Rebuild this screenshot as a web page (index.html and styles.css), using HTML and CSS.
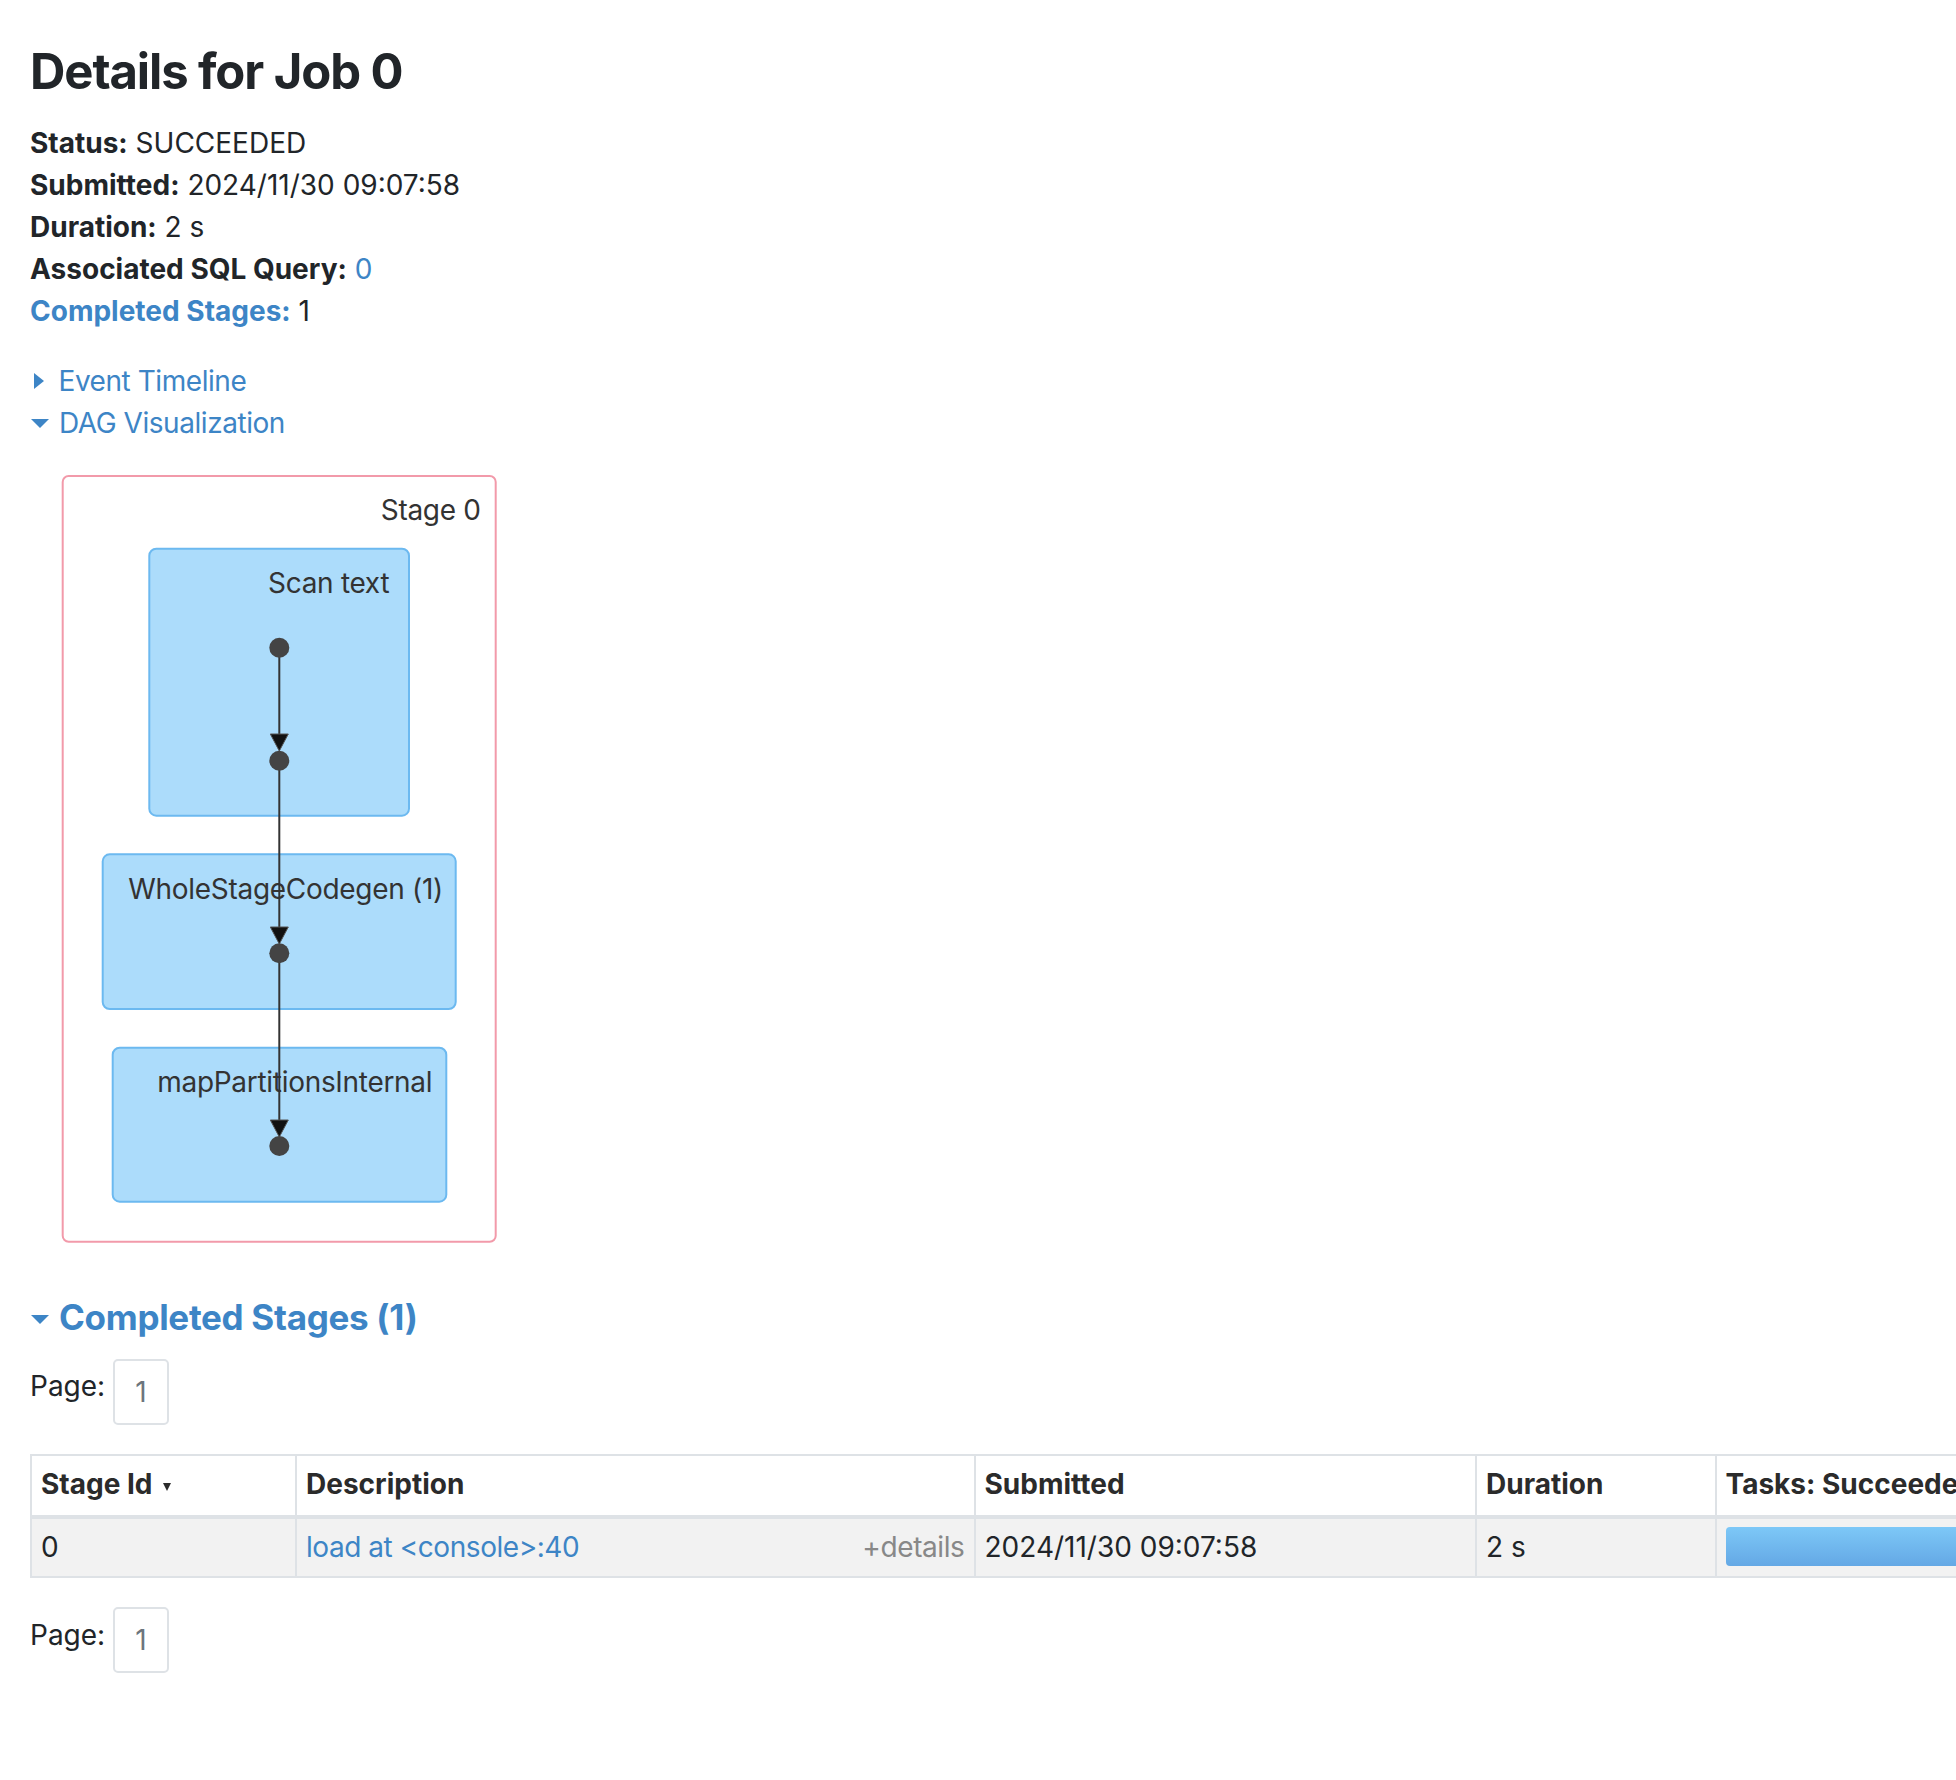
FILE: index.html
```html
<!DOCTYPE html>
<html>
<head>
<meta charset="utf-8">
<title>Details for Job 0</title>
<link rel="stylesheet" href="styles.css">
</head>
<body>
<div class="page">
  <h3 class="title">Details for Job 0</h3>
  <ul class="summary">
    <li><strong>Status:</strong> SUCCEEDED</li>
    <li><strong>Submitted:</strong> 2024/11/30 09:07:58</li>
    <li><strong>Duration:</strong> 2 s</li>
    <li><strong>Associated SQL Query:</strong> <a class="link" href="#">0</a></li>
    <li><a class="link strong summary-link" href="#">Completed Stages:</a> 1</li>
  </ul>

  <div class="toggles">
    <div class="toggle"><span class="tri tri-right"></span><a class="link" href="#">Event Timeline</a></div>
    <div class="toggle"><span class="tri tri-down"></span><a class="link" href="#">DAG Visualization</a></div>
  </div>

  <svg class="dag" width="520" height="790" viewBox="0 0 520 790" xmlns="http://www.w3.org/2000/svg">
    <rect class="stage" x="32.7" y="16" width="433" height="765.7" rx="6" ry="6"/>
    <text class="dag-label" x="450.7" y="60" text-anchor="end">Stage 0</text>

    <rect class="node" x="119.3" y="88.7" width="259.7" height="267" rx="7" ry="7"/>
    <rect class="node" x="72.7" y="394.3" width="353" height="154.7" rx="7" ry="7"/>
    <rect class="node" x="82.7" y="587.7" width="333.6" height="154" rx="7" ry="7"/>

    <text class="dag-label" x="238" y="132.7">Scan text</text>
    <text class="dag-label" x="98.3" y="439.3">WholeStageCodegen (1)</text>
    <text class="dag-label" x="127.3" y="631.7">mapPartitionsInternal</text>

    <line class="edge" x1="249.3" y1="187.7" x2="249.3" y2="285"/>
    <line class="edge" x1="249.3" y1="300.7" x2="249.3" y2="478"/>
    <line class="edge" x1="249.3" y1="493.3" x2="249.3" y2="670"/>
    <polygon class="arrow" points="240.3,274 258.3,274 249.3,291"/>
    <polygon class="arrow" points="240.3,467 258.3,467 249.3,484"/>
    <polygon class="arrow" points="240.3,660 258.3,660 249.3,677"/>

    <circle class="dot" cx="249.3" cy="187.7" r="10"/>
    <circle class="dot" cx="249.3" cy="300.7" r="10"/>
    <circle class="dot" cx="249.3" cy="493.3" r="10"/>
    <circle class="dot" cx="249.3" cy="686" r="10"/>
  </svg>

  <h4 class="section"><span class="tri tri-down"></span><a class="link strong" href="#">Completed Stages (1)</a></h4>

  <div class="pager pager-top">
    <span class="pager-label">Page:</span>
    <span class="page-box">1</span>
  </div>

  <div class="table-wrap">
    <table class="stages">
      <colgroup>
        <col class="c-id">
        <col class="c-desc">
        <col class="c-sub">
        <col class="c-dur">
        <col class="c-tasks">
      </colgroup>
      <thead>
        <tr>
          <th>Stage Id<span class="sort"></span></th>
          <th>Description</th>
          <th>Submitted</th>
          <th>Duration</th>
          <th>Tasks: Succeeded/Total</th>
        </tr>
      </thead>
      <tbody>
        <tr>
          <td>0</td>
          <td><span class="details">+details</span><a class="link" href="#">load at &lt;console&gt;:40</a></td>
          <td>2024/11/30 09:07:58</td>
          <td>2 s</td>
          <td><div class="progress"></div></td>
        </tr>
      </tbody>
    </table>
  </div>

  <div class="pager pager-bottom">
    <span class="pager-label">Page:</span>
    <span class="page-box">1</span>
  </div>
</div>
</body>
</html>
```

FILE: styles.css
```css
html, body {
  margin: 0;
  padding: 0;
  background: #ffffff;
  overflow: hidden;
}

body {
  font-family: Inter, "Liberation Sans", sans-serif;
  font-size: 28px;
  line-height: 42px;
  color: #212529;
}

.page {
  padding: 0 0 0 30px;
}

.link {
  color: #3d85c6;
  text-decoration: none;
  letter-spacing: -0.45px;
}

.strong {
  font-weight: 700;
  letter-spacing: -0.2px;
}

.summary .summary-link {
  letter-spacing: 0;
}

.title {
  font-size: 49px;
  font-weight: 700;
  line-height: 58.8px;
  letter-spacing: -1.1px;
  margin: 42.5px 0 20.6px;
  color: #212529;
}

.summary {
  list-style: none;
  margin: 0 0 28.3px;
  padding: 0;
}

.summary strong {
  font-weight: 700;
}

.toggles {
  display: flex;
  flex-direction: column;
}

.toggle {
  display: flex;
  align-items: center;
  height: 42px;
}

.tri {
  display: inline-block;
  width: 0;
  height: 0;
  border-style: solid;
  flex-shrink: 0;
}

.tri-right {
  border-width: 8.5px 0 8.5px 10px;
  border-color: transparent transparent transparent #3d85c6;
  margin: 0 14.5px 0 4px;
}

.tri-down {
  border-width: 9.5px 9px 0 9px;
  border-color: #3d85c6 transparent transparent transparent;
  margin: 0 10px 0 1px;
}

.dag {
  display: block;
  margin-top: 15.45px;
}

.dag .stage {
  fill: #ffffff;
  stroke: #f29aaa;
  stroke-width: 2;
}

.dag .node {
  fill: #acdcfb;
  stroke: #6cb9f0;
  stroke-width: 2;
}

.dag .dag-label {
  font-family: Inter, "Liberation Sans", sans-serif;
  font-size: 28px;
  letter-spacing: -0.3px;
  fill: #333333;
}

.dag .edge {
  stroke: #333333;
  stroke-width: 2;
}

.dag .arrow {
  fill: #111111;
  stroke: #555555;
  stroke-width: 1;
}

.dag .dot {
  fill: #444444;
}

.section {
  display: flex;
  align-items: center;
  margin: 46.7px 0 0;
  font-size: 35px;
  font-weight: 700;
  line-height: 42px;
}

.section .link {
  letter-spacing: -0.3px;
}

.section .tri-down {
  margin-right: 10px;
  margin-top: 4px;
}

.pager {
  display: flex;
  align-items: flex-start;
}

.pager-top {
  margin-top: 20.6px;
}

.pager-bottom {
  margin-top: 29.8px;
}

.pager-label {
  margin-top: 7.4px;
  line-height: 41.7px;
}

.page-box {
  box-sizing: border-box;
  width: 56.6px;
  height: 65.7px;
  margin-left: 7.5px;
  padding-top: 10.7px;
  border: 2px solid #dee2e6;
  border-radius: 5px;
  text-align: center;
  color: #6c757d;
  line-height: 41.7px;
}

.table-wrap {
  margin-top: 29px;
  width: 2400px;
}

.stages {
  border-collapse: collapse;
  table-layout: fixed;
  width: 2284.5px;
}

.c-id { width: 265px; }
.c-desc { width: 678.5px; }
.c-sub { width: 501.5px; }
.c-dur { width: 239.5px; }
.c-tasks { width: 600px; }

.stages th,
.stages td {
  border: 2px solid #dee2e6;
  text-align: left;
  vertical-align: top;
  white-space: nowrap;
  overflow: hidden;
  line-height: 41.7px;
}

.stages th {
  padding: 8px 9px 9.6px;
  font-weight: 700;
  color: #2b2b2b;
  border-bottom-width: 4px;
}

.stages td {
  padding: 8px 9px 7px;
  background: #f2f2f2;
}

.sort {
  display: inline-block;
  width: 0;
  height: 0;
  border-style: solid;
  border-width: 8px 4.5px 0 4.5px;
  border-color: #2b2b2b transparent transparent transparent;
  margin-left: 10px;
  vertical-align: 3px;
}

.details {
  float: right;
  color: #888888;
  letter-spacing: -0.4px;
}

.progress {
  height: 39.4px;
  border-radius: 4px;
  background: linear-gradient(to bottom, #7dc8f7, #64a8e5);
}
```
